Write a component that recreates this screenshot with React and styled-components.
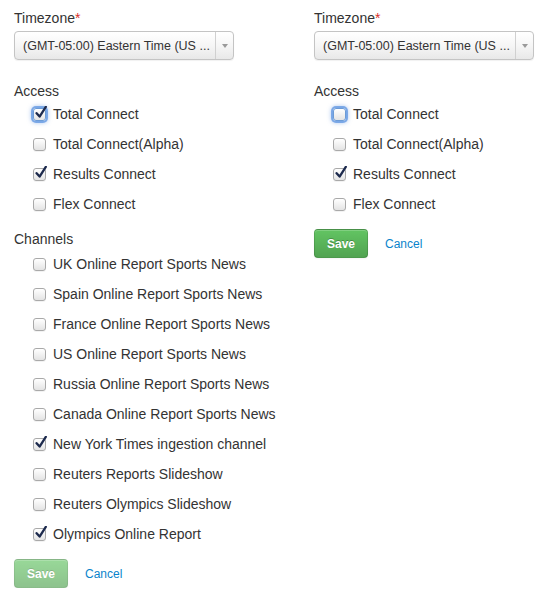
import styled, { createGlobalStyle } from 'styled-components'

const GlobalStyle = createGlobalStyle`
  body {
    margin: 0;
    background: #fff;
    font-family: "Liberation Sans", Arial, sans-serif;
    color: #333;
  }
`

const Page = styled.div`
  display: flex;
  gap: 80px;
  padding: 8px 0 0 14px;
`

const Column = styled.form`
  width: 220px;
  display: flex;
  flex-direction: column;
`

const Label = styled.div`
  font-size: 14px;
  line-height: 20px;
  margin-top: ${({ $top }) => $top || 0}px;
  margin-bottom: ${({ $bottom }) => $bottom || 0}px;
`

const Required = styled.span`
  color: #d9312b;
`

const Select = styled.div`
  height: 27px;
  display: flex;
  align-items: center;
  border: 1px solid #c4c4c4;
  border-radius: 4px;
  background: linear-gradient(#ffffff 0%, #f6f6f6 50%, #e8e8e8 100%);
  box-shadow: 0 1px 1px rgba(0, 0, 0, 0.06);
`

const SelectText = styled.span`
  flex: 1;
  padding-left: 8px;
  font-size: 12.5px;
  color: #333;
  white-space: nowrap;
  overflow: hidden;
`

const SelectArrow = styled.span`
  width: 17px;
  height: 100%;
  border-left: 1px solid #d0d0d0;
  display: flex;
  align-items: center;
  justify-content: center;

  &::after {
    content: '';
    border-left: 3px solid transparent;
    border-right: 3px solid transparent;
    border-top: 4px solid #9a9a9a;
  }
`

const List = styled.div`
  display: flex;
  flex-direction: column;
  gap: 10px;
  margin-top: ${({ $top }) => $top}px;
`

const Row = styled.label`
  display: flex;
  align-items: center;
  gap: 7px;
  padding-left: 19px;
  font-size: 14px;
  line-height: 20px;
  white-space: nowrap;
`

const Box = styled.span`
  position: relative;
  width: 11px;
  height: 11px;
  border: 1px solid ${({ $focus }) => ($focus ? '#6b9bd6' : '#a9a9a9')};
  border-radius: 3px;
  background: linear-gradient(#ffffff, #e4e4e4);
  box-shadow: ${({ $focus }) =>
    $focus ? '0 0 0 2px rgba(95, 150, 225, 0.75), 0 0 4px 2px rgba(95, 150, 225, 0.5)' : '0 1px 0 rgba(0,0,0,0.05)'};
  flex-shrink: 0;
`

const Check = styled.svg`
  position: absolute;
  left: 1px;
  top: -3px;
  width: 12px;
  height: 13px;
`

const Actions = styled.div`
  display: flex;
  align-items: center;
  gap: 17px;
  margin-top: 15px;
`

const SaveButton = styled.button`
  width: 54px;
  height: 29px;
  border: 1px solid rgba(0, 0, 0, 0.12);
  border-bottom-color: rgba(0, 0, 0, 0.22);
  border-radius: 4px;
  background: linear-gradient(#62c462, #51a351);
  color: #fff;
  font-family: "Liberation Sans", Arial, sans-serif;
  font-weight: bold;
  font-size: 12px;
  text-shadow: 0 -1px 0 rgba(0, 0, 0, 0.25);
  box-shadow: inset 0 1px 0 rgba(255, 255, 255, 0.2), 0 1px 2px rgba(0, 0, 0, 0.05);
  opacity: ${({ disabled }) => (disabled ? 0.65 : 1)};
  padding: 0;
`

const CancelLink = styled.a`
  color: #0a84cc;
  font-size: 12px;
  text-decoration: none;
`

const Checkbox = ({ checked, focus, children }) => (
  <Row>
    <Box $focus={focus}>
      {checked && (
        <Check viewBox="0 0 12 13">
          <path d="M1.6 7.2 L4.6 10.6 L10.8 0.8" fill="none" stroke="#1d2a4d" strokeWidth="2.3" strokeLinejoin="round" strokeLinecap="round" />
        </Check>
      )}
    </Box>
    {children}
  </Row>
)

const accessNames = ['Total Connect', 'Total Connect(Alpha)', 'Results Connect', 'Flex Connect']

const channels = [
  ['UK Online Report Sports News', false],
  ['Spain Online Report Sports News', false],
  ['France Online Report Sports News', false],
  ['US Online Report Sports News', false],
  ['Russia Online Report Sports News', false],
  ['Canada Online Report Sports News', false],
  ['New York Times ingestion channel', true],
  ['Reuters Reports Slideshow', false],
  ['Reuters Olympics Slideshow', false],
  ['Olympics Online Report', true],
]

const UserForm = ({ accessChecked, showChannels, disabled }) => (
  <Column>
    <Label $bottom={3}>
      Timezone<Required>*</Required>
    </Label>
    <Select>
      <SelectText>(GMT-05:00) Eastern Time (US ...</SelectText>
      <SelectArrow />
    </Select>
    <Label $top={21}>Access</Label>
    <List $top={3}>
      {accessNames.map((name, i) => (
        <Checkbox key={name} checked={accessChecked[i]} focus={i === 0}>
          {name}
        </Checkbox>
      ))}
    </List>
    {showChannels && (
      <>
        <Label $top={15}>Channels</Label>
        <List $top={5}>
          {channels.map(([name, on]) => (
            <Checkbox key={name} checked={on}>
              {name}
            </Checkbox>
          ))}
        </List>
      </>
    )}
    <Actions>
      <SaveButton type="button" disabled={disabled}>Save</SaveButton>
      <CancelLink href="#">Cancel</CancelLink>
    </Actions>
  </Column>
)

export default function App() {
  return (
    <>
      <GlobalStyle />
      <Page>
        <UserForm accessChecked={[true, false, true, false]} showChannels disabled />
        <UserForm accessChecked={[false, false, true, false]} />
      </Page>
    </>
  )
}
